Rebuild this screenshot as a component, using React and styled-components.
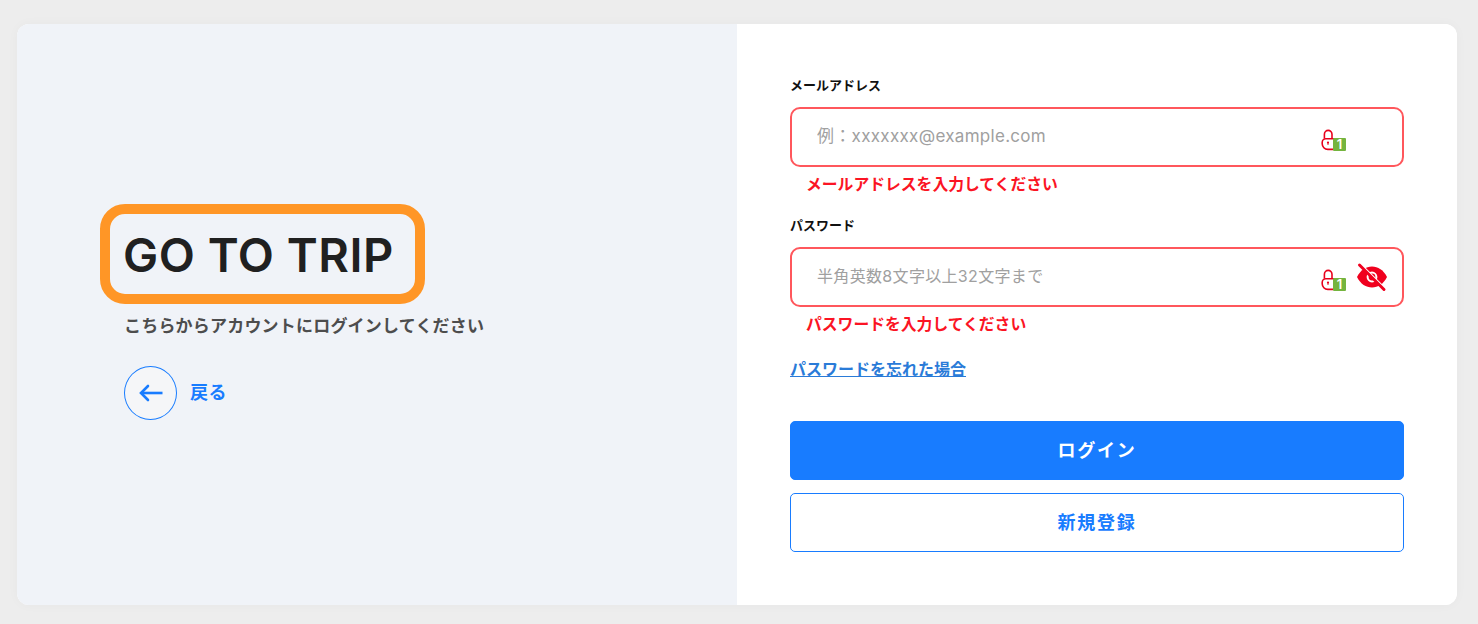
import React from 'react';
import styled, { createGlobalStyle } from 'styled-components';

const FONT = `Inter, "Noto Sans CJK JP", sans-serif`;

const Global = createGlobalStyle`
  html, body { margin: 0; padding: 0; background: #ededed; }
  * { box-sizing: border-box; }
  body { font-family: ${FONT}; }
`;

const Page = styled.div`
  width: 1478px;
  height: 624px;
  padding: 24px 21px 19px 17px;
  background: #ededed;
`;

const Card = styled.div`
  display: grid;
  grid-template-columns: 720px 720px;
  height: 581px;
  border-radius: 12px;
  overflow: hidden;
  background: #ffffff;
  box-shadow: 0 0 12px rgba(0, 0, 0, 0.03);
`;

const Intro = styled.div`
  display: flex;
  flex-direction: column;
  align-items: flex-start;
  justify-content: center;
  padding: 0 0 6px 83px;
  background: #f0f3f8;
`;

const Logo = styled.div`
  width: 325px;
  height: 100px;
  padding: 2px 0 0 13px;
  display: flex;
  align-items: center;
  border: 10px solid #ff9626;
  border-radius: 25px;
  font-size: 47px;
  font-weight: 600;
  letter-spacing: 0.5px;
  color: #202020;
  white-space: nowrap;
`;

const Lead = styled.p`
  margin: 11px 0 0 24px;
  font-size: 17px;
  line-height: 22px;
  font-weight: 600;
  letter-spacing: 0.2px;
  color: #4d4d4d;
`;

const Back = styled.a`
  display: flex;
  align-items: center;
  gap: 13px;
  margin: 29px 0 0 24px;
  font-size: 18px;
  line-height: 22px;
  font-weight: 600;
  letter-spacing: 0.5px;
  color: #187cff;
`;

const BackCircle = styled.span`
  display: flex;
  align-items: center;
  justify-content: center;
  width: 53px;
  height: 54px;
  border: 1px solid #187cff;
  border-radius: 50%;
  background: #f5f6f8;
`;

const BackLabel = styled.span`
  padding-top: 1px;
`;

const Form = styled.form`
  display: flex;
  flex-direction: column;
  padding: 52px 53px 0;
  background: #ffffff;
`;

const Field = styled.div`
  height: 140px;
`;

const Label = styled.label`
  display: block;
  height: 20px;
  margin-bottom: 11px;
  font-size: 13px;
  line-height: 19px;
  font-weight: 600;
  color: #111111;
`;

const InputBox = styled.div`
  display: flex;
  align-items: center;
  height: 60px;
  padding: 0 15px 0 25px;
  border: 2px solid #ff575c;
  border-radius: 10px;
`;

const Input = styled.input`
  flex: 1;
  min-width: 0;
  border: 0;
  outline: 0;
  padding: 0 0 2px;
  background: transparent;
  font-family: ${FONT};
  font-size: ${(p) => p.$size};
  letter-spacing: ${(p) => p.$tracking};
  color: #111111;
  &::placeholder { color: #a0a0a0; opacity: 1; }
`;

const LockWrap = styled.span`
  display: flex;
  position: relative;
  width: 26px;
  height: 24px;
  margin: 8px 10px 0 0;
`;

const Badge = styled.span`
  position: absolute;
  left: 12px;
  top: 9px;
  width: 13px;
  height: 13px;
  border-radius: 1px;
  background: #74b43e;
  color: #ffffff;
  font-size: 13px;
  line-height: 13px;
  font-weight: 600;
  text-align: center;
`;

const EyeSlot = styled.span`
  display: flex;
  justify-content: center;
  width: 30px;
  height: 30px;
`;

const ErrorText = styled.p`
  margin: 8px 0 0 16px;
  font-size: 15.8px;
  line-height: 20px;
  font-weight: 600;
  color: #fb1424;
`;

const ForgotLink = styled.a`
  align-self: flex-start;
  margin-top: 3px;
  font-size: 16px;
  line-height: 20px;
  font-weight: 600;
  color: #2a7bd8;
  text-decoration: underline;
`;

const Button = styled.button`
  display: block;
  width: 100%;
  height: 59px;
  margin-top: ${(p) => (p.$primary ? '42px' : '13px')};
  padding: 0 0 3px;
  border: 1px solid #187cff;
  border-radius: 5px;
  background: ${(p) => (p.$primary ? '#187cff' : '#ffffff')};
  color: ${(p) => (p.$primary ? '#ffffff' : '#187cff')};
  font-family: ${FONT};
  font-size: 18px;
  font-weight: 600;
  letter-spacing: 0.1em;
`;

const LockIcon = () => (
  <LockWrap>
    <svg width="14" height="22" viewBox="0 0 14 22" fill="none" stroke="#e8001c" strokeWidth="1.6">
      <path d="M3.4 9.5V5.2a3.8 3.8 0 0 1 7.6 0v4.3" />
      <path d="M13 9.8H4.8A3.6 3.6 0 0 0 1.2 13.400v1.400A5.6 5.6 0 0 0 6.8 20.400H12" />
      <circle cx="7" cy="13.500" r="1.1" fill="#e8001c" stroke="none" />
      <path d="M7 13.500v2.400" strokeWidth="1" />
    </svg>
    <Badge>1</Badge>
  </LockWrap>
);

const EyeOff = () => (
  <svg width="30" height="30" viewBox="0 0 30 30">
    <path d="M0 15C3.500 8 9 4.500 15 4.500S26.500 8 30 15C26.500 22 21 25.500 15 25.500S3.500 22 0 15Z" fill="#f0001e" />
    <circle cx="15" cy="15" r="4.4" fill="none" stroke="#ffffff" strokeWidth="2" />
    <path d="M4 2.500l24.500 24.500" stroke="#ffffff" strokeWidth="1.800" />
    <path d="M2.500 3l24.500 24.500" stroke="#f0001e" strokeWidth="3" strokeLinecap="round" />
  </svg>
);

const App = () => (
  <>
    <Global />
    <Page>
      <Card>
        <Intro>
          <Logo>GO TO TRIP</Logo>
          <Lead>こちらからアカウントにログインしてください</Lead>
          <Back>
            <BackCircle>
              <svg width="26" height="20" viewBox="0 0 26 20" fill="none" stroke="#187cff" strokeWidth="2.6">
                <path d="M24.5 10H3" />
                <path d="M10 3l-7 7 7 7" strokeLinecap="round" />
              </svg>
            </BackCircle>
            <BackLabel>戻る</BackLabel>
          </Back>
        </Intro>

        <Form>
          <Field>
            <Label>メールアドレス</Label>
            <InputBox>
              <Input $size="17px" $tracking="0.3px" placeholder="例：xxxxxxx@example.com" />
              <LockIcon />
              <EyeSlot />
            </InputBox>
            <ErrorText>メールアドレスを入力してください</ErrorText>
          </Field>

          <Field>
            <Label>パスワード</Label>
            <InputBox>
              <Input $size="16px" $tracking="0.33px" placeholder="半角英数8文字以上32文字まで" />
              <LockIcon />
              <EyeSlot>
                <EyeOff />
              </EyeSlot>
            </InputBox>
            <ErrorText>パスワードを入力してください</ErrorText>
          </Field>

          <ForgotLink>パスワードを忘れた場合</ForgotLink>
          <Button type="button" $primary>ログイン</Button>
          <Button type="button">新規登録</Button>
        </Form>
      </Card>
    </Page>
  </>
);

export default App;
